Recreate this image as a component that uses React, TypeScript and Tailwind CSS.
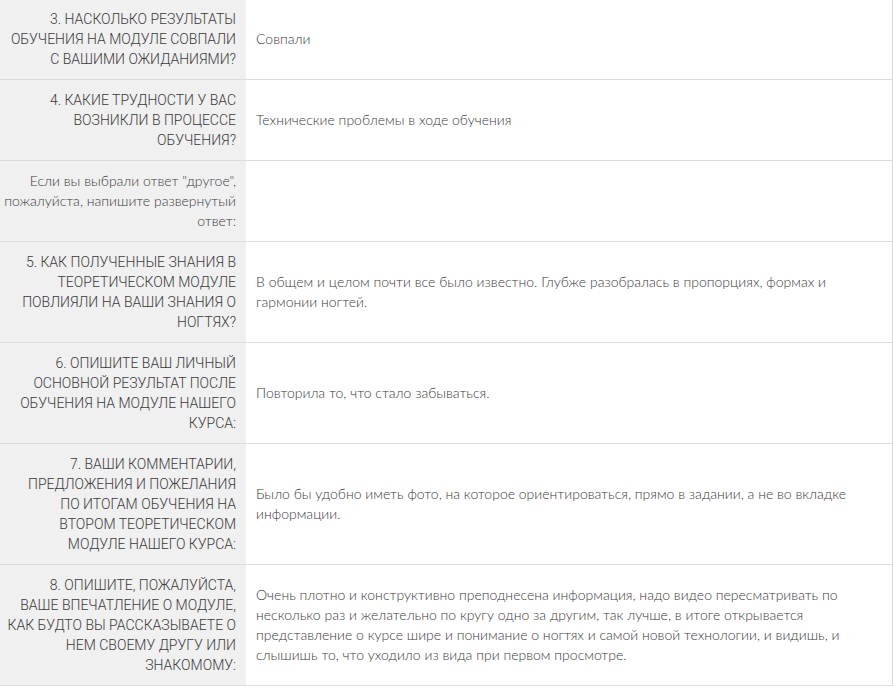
import React from "react";

type Row = { q: React.ReactNode; a: React.ReactNode; lower?: boolean };

const rows: Row[] = [
  {
    q: (
      <>
        3. НАСКОЛЬКО РЕЗУЛЬТАТЫ<br />ОБУЧЕНИЯ НА МОДУЛЕ СОВПАЛИ<br />С ВАШИМИ ОЖИДАНИЯМИ?
      </>
    ),
    a: "Совпали",
  },
  {
    q: (
      <>
        4. КАКИЕ ТРУДНОСТИ У ВАС<br />ВОЗНИКЛИ В ПРОЦЕССЕ<br />ОБУЧЕНИЯ?
      </>
    ),
    a: "Технические проблемы в ходе обучения",
  },
  {
    q: (
      <>
        Если вы выбрали ответ "другое",<br />пожалуйста, напишите развернутый<br />ответ:
      </>
    ),
    a: "",
    lower: true,
  },
  {
    q: (
      <>
        5. КАК ПОЛУЧЕННЫЕ ЗНАНИЯ В<br />ТЕОРЕТИЧЕСКОМ МОДУЛЕ<br />ПОВЛИЯЛИ НА ВАШИ ЗНАНИЯ О<br />НОГТЯХ?
      </>
    ),
    a: (
      <>
        В общем и целом почти все было известно. Глубже разобралась в пропорциях, формах и<br />гармонии ногтей.
      </>
    ),
  },
  {
    q: (
      <>
        6. ОПИШИТЕ ВАШ ЛИЧНЫЙ<br />ОСНОВНОЙ РЕЗУЛЬТАТ ПОСЛЕ<br />ОБУЧЕНИЯ НА МОДУЛЕ НАШЕГО<br />КУРСА:
      </>
    ),
    a: "Повторила то, что стало забываться.",
  },
  {
    q: (
      <>
        7. ВАШИ КОММЕНТАРИИ,<br />ПРЕДЛОЖЕНИЯ И ПОЖЕЛАНИЯ<br />ПО ИТОГАМ ОБУЧЕНИЯ НА<br />ВТОРОМ ТЕОРЕТИЧЕСКОМ<br />МОДУЛЕ НАШЕГО КУРСА:
      </>
    ),
    a: (
      <>
        Было бы удобно иметь фото, на которое ориентироваться, прямо в задании, а не во вкладке<br />информации.
      </>
    ),
  },
  {
    q: (
      <>
        8. ОПИШИТЕ, ПОЖАЛУЙСТА,<br />ВАШЕ ВПЕЧАТЛЕНИЕ О МОДУЛЕ,<br />КАК БУДТО ВЫ РАССКАЗЫВАЕТЕ О<br />НЕМ СВОЕМУ ДРУГУ ИЛИ<br />ЗНАКОМОМУ:
      </>
    ),
    a: (
      <>
        Очень плотно и конструктивно преподнесена информация, надо видео пересматривать по<br />
        несколько раз и желательно по кругу одно за другим, так лучше, в итоге открывается<br />
        представление о курсе шире и понимание о ногтях и самой новой технологии, и видишь, и<br />
        слышишь то, что уходило из вида при первом просмотре.
      </>
    ),
  },
];

export default function App() {
  return (
    <div
      className="w-[894px] h-[687px] overflow-hidden bg-white text-[#3a3a3a] text-[14px] leading-[20px]"
      style={{ fontFamily: "Lato, 'Liberation Sans', sans-serif" }}
    >
      <div className="-mt-px w-[893px] border-r border-[#d9d9d9]">
        {rows.map((r, i) => (
          <div key={i} className="flex border-b border-[#dcdcdc]">
            <div className="w-[246px] shrink-0 bg-[#f0f0f0] py-[10px] pr-[10px] whitespace-nowrap flex justify-end">
              {r.lower ? (
                <div className="text-right font-light">{r.q}</div>
              ) : (
                <div className="text-right font-light" style={{ fontFamily: "Roboto, sans-serif" }}>
                  {r.q}
                </div>
              )}
            </div>
            <div className="flex-1 flex items-center px-[10px] py-[10px] font-light">
              <div>{r.a}</div>
            </div>
          </div>
        ))}
      </div>
    </div>
  );
}
